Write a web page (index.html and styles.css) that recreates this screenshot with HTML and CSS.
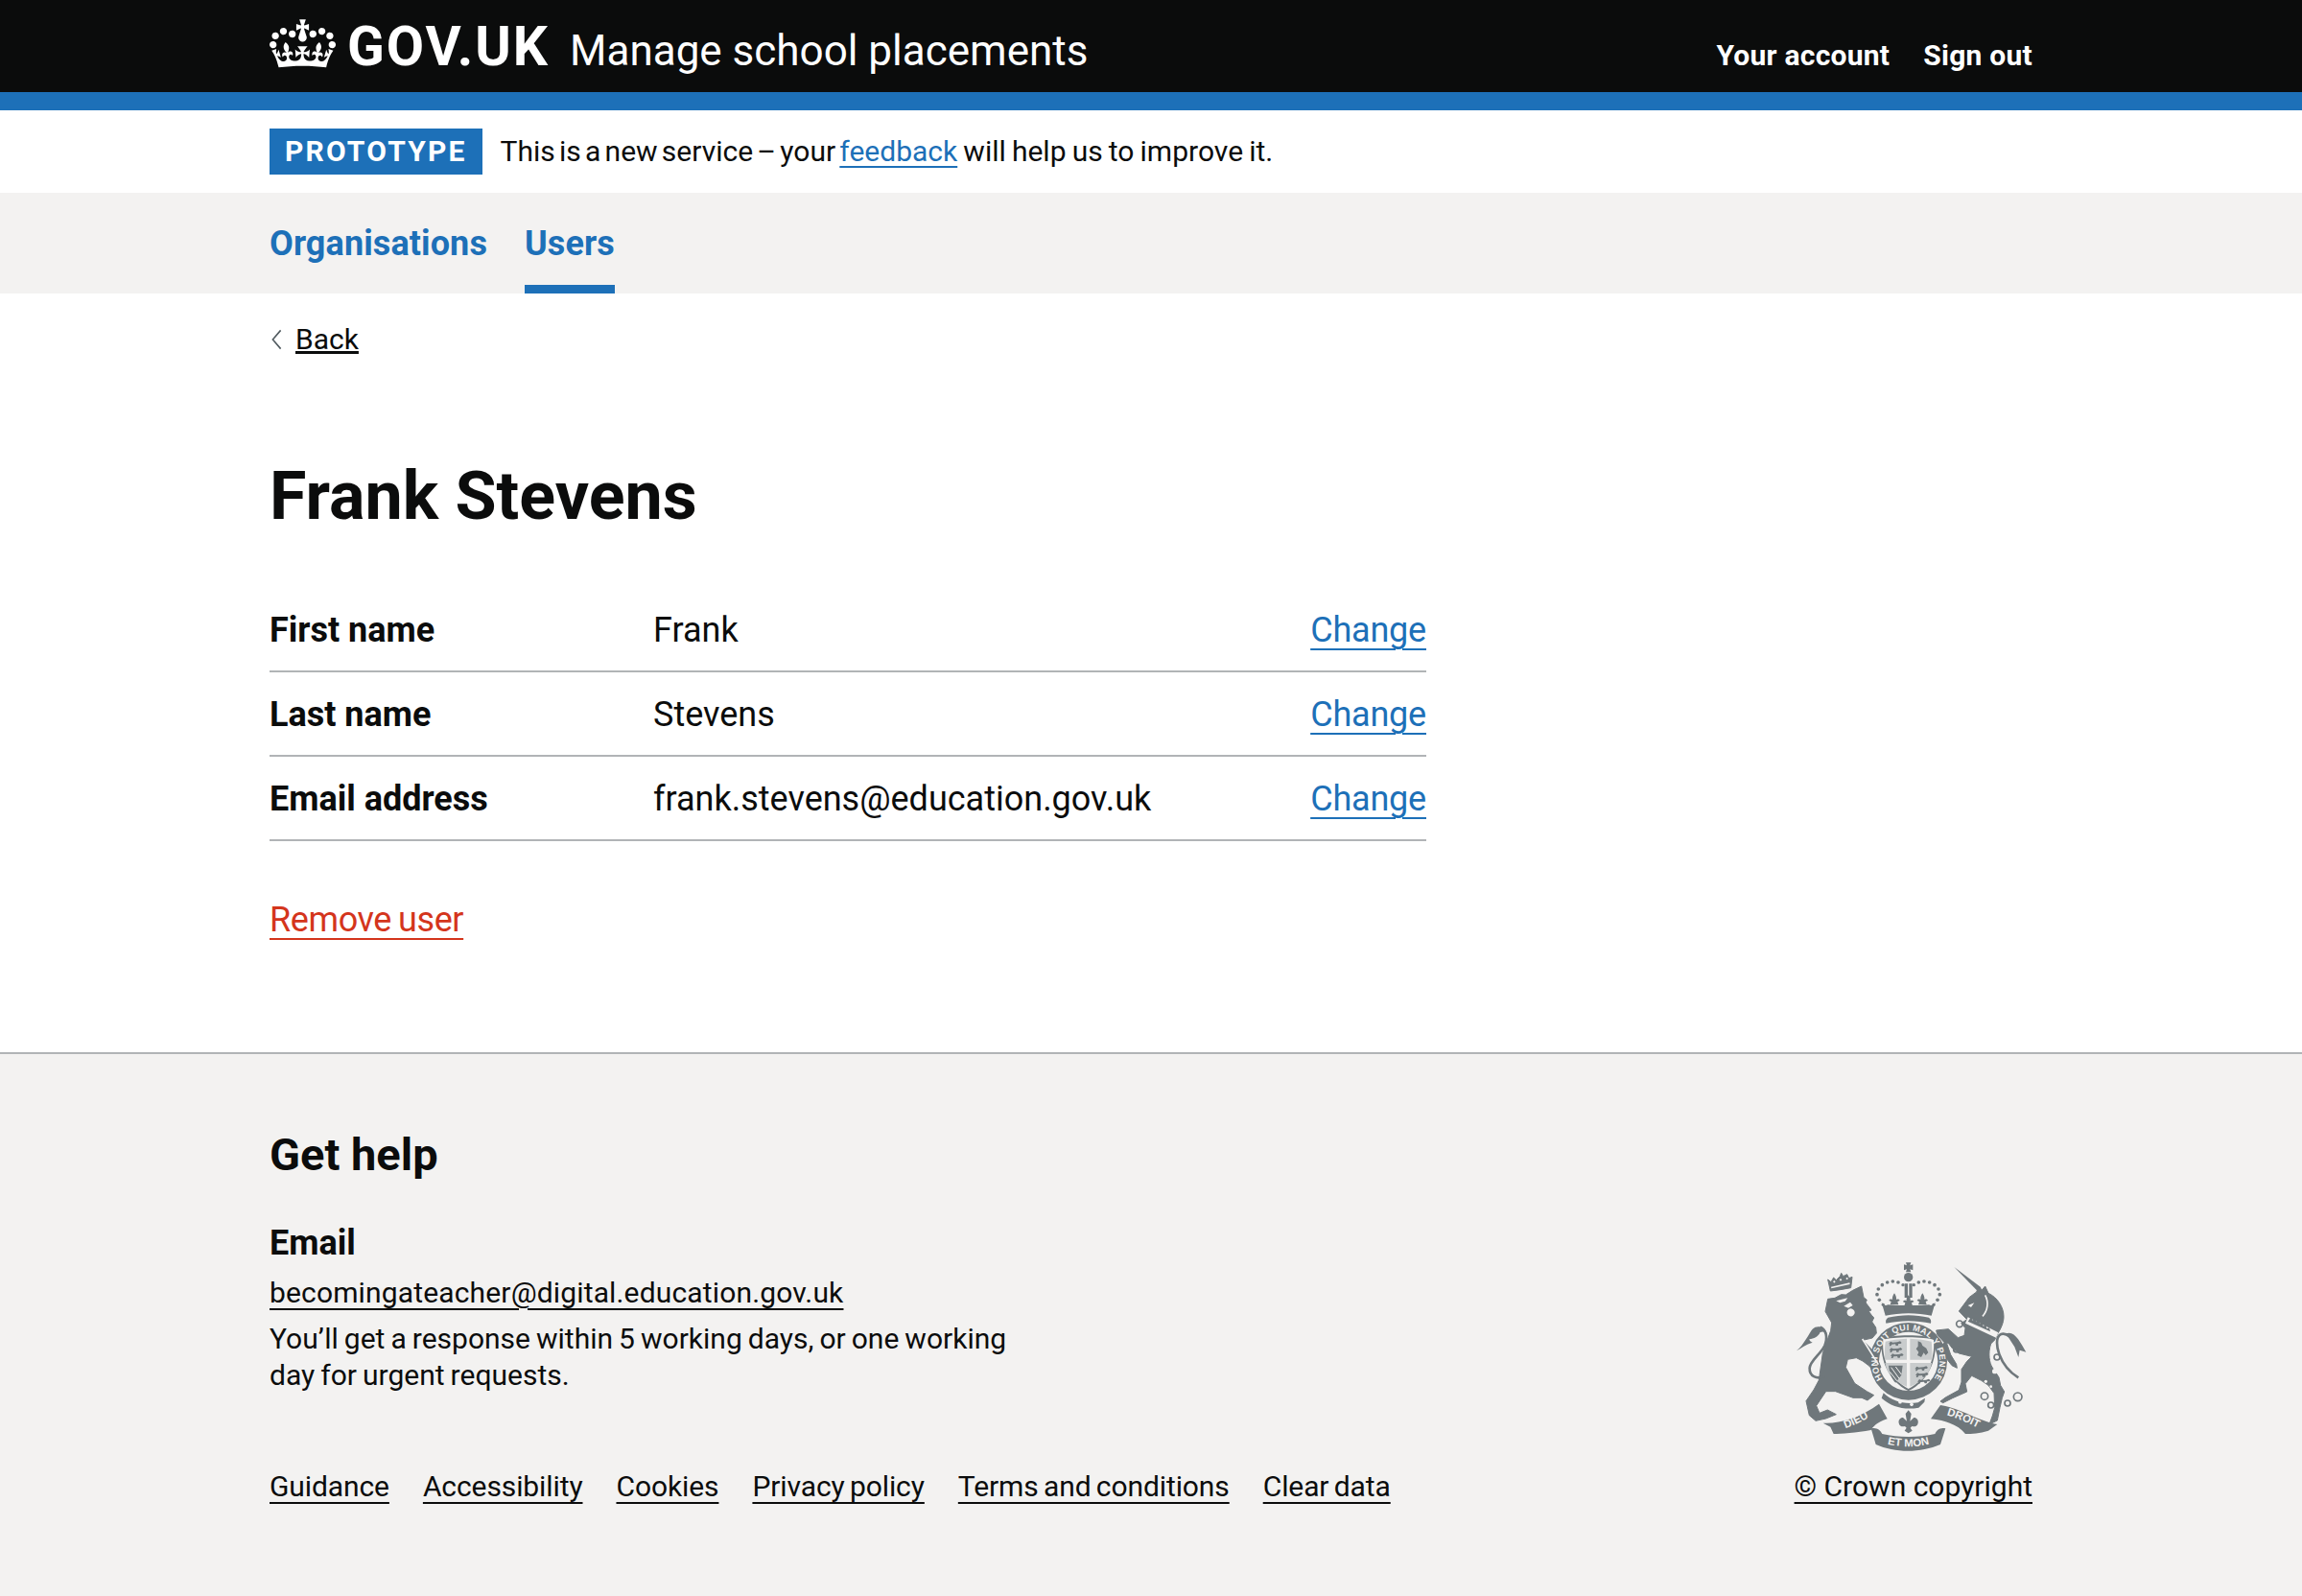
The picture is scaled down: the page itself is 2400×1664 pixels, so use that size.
FILE: index.html
```html
<!DOCTYPE html>
<html lang="en">
<head>
<meta charset="utf-8">
<title>Frank Stevens - Manage school placements</title>
<link rel="stylesheet" href="styles.css">
</head>
<body>
<header class="header">
  <div class="container header-row">
    <svg class="crown" viewBox="0 0 132 97" aria-hidden="true"><path fill="currentColor" fill-rule="evenodd" d="M25 30.2c3.5 1.5 7.7-.2 9.1-3.7 1.5-3.6-.2-7.8-3.9-9.2-3.6-1.4-7.6.3-9.1 3.9-1.4 3.5.3 7.5 3.9 9zM9 39.5c3.6 1.5 7.8-.2 9.2-3.7 1.5-3.6-.2-7.8-3.9-9.1-3.6-1.5-7.6.2-9.1 3.8-1.4 3.5.3 7.5 3.8 9zM4.4 57.2c3.5 1.5 7.7-.2 9.1-3.8 1.5-3.6-.2-7.7-3.9-9.1-3.5-1.5-7.6.3-9.1 3.8-1.4 3.5.3 7.6 3.9 9.1zm38.3-21.4c3.5 1.5 7.7-.2 9.1-3.8 1.5-3.6-.2-7.7-3.9-9.1-3.6-1.5-7.6.3-9.1 3.8-1.3 3.6.4 7.7 3.9 9.1zm64.4-5.6c-3.6 1.5-7.8-.2-9.1-3.7-1.5-3.6.2-7.8 3.8-9.2 3.6-1.4 7.7.3 9.2 3.9 1.3 3.5-.4 7.5-3.9 9zm15.9 9.3c-3.6 1.5-7.7-.2-9.1-3.7-1.5-3.6.2-7.8 3.7-9.1 3.6-1.5 7.7.2 9.2 3.8 1.5 3.5-.3 7.5-3.8 9zm4.7 17.7c-3.6 1.5-7.8-.2-9.2-3.8-1.5-3.6.2-7.7 3.9-9.1 3.6-1.5 7.7.3 9.2 3.8 1.3 3.5-.4 7.6-3.9 9.1zM89.3 35.8c-3.6 1.5-7.8-.2-9.2-3.8-1.4-3.6.2-7.7 3.9-9.1 3.6-1.5 7.7.3 9.2 3.8 1.4 3.6-.3 7.7-3.9 9.1zM69.7 17.7l8.9 4.7V9.3l-8.9 2.8c-.2-.3-.5-.6-.9-.9L72.4 0H59.6l3.5 11.2c-.3.3-.6.5-.9.9l-8.8-2.8v13.1l8.8-4.7c.3.3.6.7.9.9l-5 15.4v.1c-.2.8-.4 1.6-.4 2.4 0 4.1 3.1 7.5 7 8.1h.2c.3 0 .7.1 1 .1.4 0 .7 0 1-.1h.2c4-.6 7.1-4.1 7.1-8.1 0-.8-.1-1.7-.4-2.4V34l-5.1-15.4c.4-.2.7-.6 1-.9zM66 92.8c16.9 0 32.8 1.1 47.1 3.2 4-16.9 8.9-26.7 14-33.5l-9.6-3.4c1 4.9 1.1 7.2 0 10.2-1.5-1.4-3-4.3-4.2-8.7L108.6 76c2.8-2 5-3.2 7.5-3.3-4.4 9.4-10 11.9-13.6 11.2-4.3-.8-6.3-4.6-5.6-7.9 1-4.7 5.7-5.9 8-.5 4.3-8.7-3-11.4-7.6-8.8 7.1-7.2 7.9-13.5 2.1-21.1-8 6.1-8.1 12.3-4.5 20.8-4.7-5.4-12.1-2.5-9.5 6.2 3.4-5.2 7.9-2 7.2 3.1-.6 4.3-6.4 7.8-13.5 7.2-10.3-.9-10.9-8-11.2-13.8 2.5-.5 7.1 1.8 11 7.3L80.2 60c-4.1 4.4-8 5.3-12.3 5.4 1.4-4.4 8-11.6 8-11.6H55.5s6.4 7.2 7.9 11.6c-4.2-.1-8-1-12.3-5.4l1.4 16.4c3.9-5.5 8.5-7.7 10.9-7.3-.3 5.8-.9 12.8-11.1 13.8-7.2.6-12.9-2.9-13.5-7.2-.7-5 3.8-8.3 7.1-3.1 2.7-8.7-4.6-11.6-9.4-6.2 3.7-8.5 3.6-14.7-4.6-20.8-5.8 7.6-5 13.9 2.2 21.1-4.7-2.6-11.9.1-7.7 8.8 2.3-5.5 7.1-4.2 8.1.5.7 3.3-1.3 7.1-5.7 7.9-3.5.7-9-1.8-13.5-11.2 2.5.1 4.7 1.3 7.5 3.3l-4.7-15.4c-1.2 4.4-2.7 7.2-4.3 8.7-1.1-3-.9-5.3 0-10.2l-9.5 3.4c5 6.9 9.9 16.7 14 33.5 14.8-2.1 30.8-3.2 47.7-3.2z"/></svg>
    <a class="logo-text" href="#">GOV.UK</a>
    <a class="service-name" href="#">Manage school placements</a>
    <nav class="account-nav">
      <a href="#">Your account</a>
      <a href="#">Sign out</a>
    </nav>
  </div>
</header>

<div class="phase-banner">
  <div class="container phase-row">
    <strong class="tag">PROTOTYPE</strong>
    <span class="phase-text"><span class="phase-lead">This is a new service – your </span><a class="link" href="#">feedback</a><span class="phase-tail"> will help us to improve it.</span></span>
  </div>
</div>

<nav class="primary-nav">
  <div class="container primary-row">
    <a href="#">Organisations</a>
    <a class="current" href="#">Users</a>
  </div>
</nav>

<main class="container main">
  <a class="back" href="#"><svg class="chevron" viewBox="0 0 12 24" aria-hidden="true"><path d="M10.5 1.5 1.5 12l9 10.5" fill="none" stroke="#505a5f" stroke-width="1.7"/></svg><span>Back</span></a>
  <h1 class="title">Frank Stevens</h1>
  <dl class="summary">
    <div class="summary-row"><dt>First name</dt><dd>Frank</dd><dd class="action"><a class="link" href="#">Change</a></dd></div>
    <div class="summary-row"><dt>Last name</dt><dd>Stevens</dd><dd class="action"><a class="link" href="#">Change</a></dd></div>
    <div class="summary-row"><dt>Email address</dt><dd>frank.stevens@education.gov.uk</dd><dd class="action"><a class="link" href="#">Change</a></dd></div>
  </dl>
  <p class="remove"><a href="#">Remove user</a></p>
</main>

<footer class="footer">
  <div class="container footer-inner">
    <h2 class="help-title">Get help</h2>
    <h3 class="help-sub">Email</h3>
    <p class="help-link"><a href="#">becomingateacher@digital.education.gov.uk</a></p>
    <p class="help-text">You’ll get a response within 5 working days, or one working day for urgent requests.</p>
    <div class="footer-bottom">
      <ul class="footer-links">
        <li><a href="#">Guidance</a></li>
        <li><a href="#">Accessibility</a></li>
        <li><a href="#">Cookies</a></li>
        <li><a href="#">Privacy policy</a></li>
        <li><a href="#">Terms and conditions</a></li>
        <li><a href="#">Clear data</a></li>
      </ul>
      <div class="copyright">
        <svg class="crest" viewBox="0 0 750 630" role="img" aria-label="Royal coat of arms">
          <defs>
            <path id="garter" d="M306 404A97 97 0 1 1 418 404"/>
            <path id="scroll-l" d="M138 543C180 532 215 515 262 486"/>
            <path id="scroll-m" d="M276 578C330 596 395 596 448 578"/>
            <path id="scroll-r" d="M470 490C515 500 550 520 590 538"/>
            <path id="lion-mini" d="M0 9l6-8 7 3 14-1 9-3 5 5-4 3-6 0-2 6h-6l-2-5-11 1-3 5h-5l2-6z"/>
          </defs>
          <g class="crest-ink">
            <path d="M354 16h16l-3 9 9-3v18l-9-3 3 9h-16l3-9-9 3V22l9 3z"/>
            <circle cx="362" cy="62" r="14"/>
            <path d="M350 82h10v44h-10zM364 82h10v44h-10z"/>
            <g class="beads">
              <circle cx="283" cy="148" r="5"/><circle cx="271" cy="133" r="5.5"/><circle cx="264" cy="116" r="5.5"/><circle cx="268" cy="99" r="5.5"/><circle cx="280" cy="86" r="5.5"/><circle cx="296" cy="78" r="5.5"/><circle cx="313" cy="75" r="5.5"/><circle cx="330" cy="78" r="5.5"/><circle cx="345" cy="86" r="5"/>
              <circle cx="441" cy="148" r="5"/><circle cx="453" cy="133" r="5.5"/><circle cx="460" cy="116" r="5.5"/><circle cx="456" cy="99" r="5.5"/><circle cx="444" cy="86" r="5.5"/><circle cx="428" cy="78" r="5.5"/><circle cx="411" cy="75" r="5.5"/><circle cx="394" cy="78" r="5.5"/><circle cx="379" cy="86" r="5"/>
            </g>
            <path d="M318 112c5 7 7 14 6 20 5-3 10-1 11 3l-7 3 3 10h-26l3-10-7-3c1-4 6-6 11-3-1-6 1-13 6-20zM406 112c5 7 7 14 6 20 5-3 10-1 11 3l-7 3 3 10h-26l3-10-7-3c1-4 6-6 11-3-1-6 1-13 6-20zM362 118c5 6 7 12 6 18 5-3 10-1 11 3l-7 3 3 10h-26l3-10-7-3c1-4 6-6 11-3-1-6 1-12 6-18z"/>
            <path d="M278 140c4 6 8 10 14 10l6-2 24 2h80l24-2 6 2c6 0 10-4 14-10l-12 42c-44-10-100-10-144 0z"/>
            <path d="M292 206c-2-8 0-14 6-18 42-10 86-10 128 0 6 4 8 10 6 18-44-10-96-10-140 0z"/>
            <circle cx="362" cy="325" r="121"/>
            <circle class="paper" cx="362" cy="325" r="92"/>
            <path d="M278 254c30-14 138-14 168 0 6 68-22 132-84 164-62-32-90-96-84-164z"/>
            <path class="paper" d="M283 258c28-11 130-11 158 0 5 62-21 122-79 153-58-31-84-91-79-153z"/>
            <path class="tint" d="M290 263c18-5 40-8 67-9v66h-69c-1-20 0-39 2-57zM367 254c27 1 49 4 67 9 2 18 3 37 2 57h-69zM367 330h68c-4 28-26 58-68 74zM289 330h68v74c-42-16-64-46-68-74z"/>
            <use href="#lion-mini" x="300" y="262"/><use href="#lion-mini" x="302" y="282"/><use href="#lion-mini" x="306" y="300"/>
            <use href="#lion-mini" x="382" y="340"/><use href="#lion-mini" x="384" y="360"/><use href="#lion-mini" x="390" y="380"/>
            <path d="M392 262l10 4 4 10 12 8 6 14-8 8-6-8-8 14-12-6 4-10-8-10 6-8zM300 338l44 0-4 30-18 24c-12-12-20-32-22-54z"/>
            <path class="line-thin" d="M308 344l26 36M322 342l18 24M304 358l22 28"/>
            <path d="M284 424c28 28 66 36 108 30l22-14-2 12-18 18c-44 8-84-2-116-30z"/>
            <circle class="paper" cx="336" cy="452" r="5.5"/><circle class="paper" cx="372" cy="460" r="5.5"/>
            <path class="soft" d="M118 105l-8-36 10 8 8-14 8 8 12-12 4-10 6 10 12-6 6 12 10-4-4 34c-20 4-44 8-64 10z"/>
            <path class="paper" d="M120 92l58-13 1 5-58 13zM130 72l4 4-4 4-4-4zM150 66l4 4-4 4-4-4zM170 62l4 4-4 4-4-4z"/>
            <path class="soft" d="M110 130l22-3 20-11 14 1 22-14 27-13 7 35 10 8-4 8 18 24-8 4 9 12 7 8-6 12 12 18 2 18-13 15-30 7 37 38 20 47-20 13-17-18-20-15-20-10-27 5-6 25 28 50 38 25 22 12-20 16-18-8-27 0-55-20-30 0-30 45 10 23 25-10 27 14-32 13-32 7-20-17-10-45 24-35 16-30 12-85 25-70 3-25-20-35z"/>
            <path class="paper" d="M136 136l26-7 10-2-8 10-16 5zM160 152l20-12 8 10-14 8zM175 162a12 12 0 1 1 0 20 12 12 0 0 1 0-20z"/>
            <path class="line-paper" d="M218 255l50 80"/>
            <path class="line-ink" d="M100 372c-26 10-48 0-47-26 1-22 35-44 47-70 10-24 6-50-14-58"/>
            <path d="M108 240c-6-24-32-30-46-16-10 12-26 48-50 68 14-8 30-20 50-26-6-2-10-6-10-10 14-2 28-8 34-22 10-4 18 0 22 6z"/>
            <path d="M505 30l84 64-11 11z"/>
            <path class="soft" d="M520 168l15-20 17-23 23-17 7-18 10 12 10-12 10 22c28 13 48 43 48 73 0 20-10 40-20 55l-8 18-12 12c-10 30-5 60 5 75l20 30 5 25 12 20-7 20-7 30-8 40-25 12 10-27 7-25-2-45-18-25-22-15-30-15-20 25 5 25-45 20-30 15-8-5 16-12 42-23 8-25 0-40 17-25 15-15-40-10-20-15-14-18-4 2 12 35 18 30 2 12-16-8-22-28-12-32 10-12-22-25-3-13 38-4 30 27 20-7 3-23-13-15 18-12z"/>
            <path class="paper" d="M548 150l20-8-10 14zM548 187l95 48-7 16-96-45z"/>
            <path class="line-paper" d="M602 118c12 22 8 48-8 66"/>
            <path d="M552 196l5-10 6 11 7-7 4 12 8-6 3 12 8-5 3 12 8-4 3 12 8-3 3 12-70-32z"/>
            <path class="line-ink" d="M706 286c-10-30-42-58-60-42-18 18-2 94 60 132"/>
            <path d="M668 238c26-10 44 28 62 58l-20-6-4 22-12-32-18-28z"/>
            <g class="rings">
              <circle cx="522" cy="208" r="10"/><circle cx="512" cy="288" r="9"/><circle cx="639" cy="312" r="9"/><circle cx="600" cy="434" r="11"/><circle cx="620" cy="462" r="9"/><circle cx="672" cy="456" r="9"/><circle cx="704" cy="436" r="13"/>
            </g>
            <circle class="paper" cx="632" cy="356" r="8"/><circle class="paper" cx="604" cy="388" r="5"/><circle class="paper" cx="620" cy="404" r="4"/>
            <path d="M95 518c45 4 120-18 175-60l26 47c-31 10-46 25-51 35-45 8-95 12-117 12l-10-22z"/>
            <path d="M245 535c17-5 30 5 35 17 50 12 115 12 165 0 5-12 17-22 33-17l-16 50c-62 27-142 27-202 0z"/>
            <path d="M432 505l30-43c58 8 128 53 178 60l-28 20c-27 8-52 10-72 10-20-27-60-42-108-47z"/>
            <path d="M362 478l9 11-4 23 12-11c9 0 15 8 13 17-2 10-11 13-19 10l-5 5 6 9-12 8-12-8 6-9-5-5c-8 3-17 0-19-10-2-9 4-17 13-17l12 11-4-23z"/>
          </g>
          <g class="crest-text">
            <text class="motto-small"><textPath href="#garter" startOffset="50%" text-anchor="middle">HONI SOIT QUI MAL Y PENSE</textPath></text>
            <text class="motto"><textPath href="#scroll-l" startOffset="50%" text-anchor="middle">DIEU</textPath></text>
            <text class="motto"><textPath href="#scroll-m" startOffset="50%" text-anchor="middle">ET MON</textPath></text>
            <text class="motto"><textPath href="#scroll-r" startOffset="50%" text-anchor="middle">DROIT</textPath></text>
          </g>
        </svg>
        <a href="#">© Crown copyright</a>
      </div>
    </div>
  </div>
</footer>
</body>
</html>
```
FILE: styles.css
```css
* { box-sizing: border-box; }
html, body { margin: 0; padding: 0; }
body {
  font-family: Roboto, "Noto Sans", "Liberation Sans", Arial, sans-serif;
  font-size: 30px;
  line-height: 38px;
  color: #0b0c0c;
  background: #fff;
}
a { color: inherit; }
.container { width: 1838px; margin: 0 auto; }

.header { background: #0b0c0c; color: #fff; height: 115px; border-bottom: 19px solid #1d70b8; }
.header-row { display: flex; align-items: baseline; height: 96px; padding-top: 19px; }
.header a { color: #fff; text-decoration: none; }
.crown { width: 69px; height: 51px; align-self: flex-start; margin: 1px 12px 0 0; flex: none; }
.logo-text { font-size: 57px; line-height: 60px; font-weight: 700; margin-right: 21px; letter-spacing: 2px; }
.service-name { font-size: 44px; line-height: 60px; }
.account-nav { margin-left: auto; display: flex; gap: 35px; font-size: 30px; font-weight: 700; letter-spacing: 0.25px; }

.phase-banner { height: 86px; background: #fff; }
.phase-row { display: flex; align-items: center; gap: 19px; height: 86px; padding-bottom: 1px; }
.tag { background: #1d70b8; color: #fff; font-size: 30px; line-height: 48px; height: 48px; padding: 0 16px; letter-spacing: 2.2px; font-weight: 700; }
.phase-text { font-size: 30px; }
.phase-lead { word-spacing: -3.2px; }
.phase-tail { word-spacing: -1.3px; }
.link { color: #1d70b8; }
.link, .back span, .remove a, .footer a { text-decoration-thickness: 2px; text-underline-offset: 5px; }
.summary .link, .remove a { text-underline-offset: 7px; }
.footer a { text-underline-offset: 6px; }

.primary-nav { background: #f3f2f1; height: 105px; }
.primary-row { display: flex; gap: 39px; height: 105px; }
.primary-row a { color: #1d70b8; font-size: 36px; font-weight: 700; line-height: 46px; padding-top: 30px; text-decoration: none; letter-spacing: 0.1px; }
.primary-row a.current { border-bottom: 9px solid #1d70b8; }

.main { padding-top: 29px; height: 791px; }
.back { display: inline-flex; align-items: center; gap: 14px; padding-left: 2px; font-size: 30px; line-height: 38px; }
.chevron { width: 11px; height: 24px; }
.title { font-size: 70px; line-height: 80px; font-weight: 700; margin: 102px 0 0; }
.summary { width: 1206px; margin: 56px 0 0; }
.summary-row { display: flex; align-items: baseline; height: 88px; padding-top: 21px; border-bottom: 2px solid #b1b4b6; font-size: 36px; line-height: 46px; }
.summary dt { width: 400px; font-weight: 700; }
.summary dd { margin: 0; }
.summary .action { margin-left: auto; letter-spacing: -0.2px; }
.remove { margin: 59px 0 0; font-size: 36px; line-height: 46px; letter-spacing: -0.4px; word-spacing: -1.5px; }
.remove a { color: #d4351c; }

.footer { background: #f3f2f1; border-top: 2px solid #b1b4b6; height: 567px; padding-top: 77px; }
.help-title { font-size: 47px; line-height: 56px; margin: 0; font-weight: 700; }
.help-sub { font-size: 36px; line-height: 46px; margin: 41px 0 0; font-weight: 700; }
.help-link { margin: 10px 0 0; letter-spacing: 0.15px; }
.help-text { margin: 10px 0 0; width: 790px; word-spacing: -1.4px; }
.footer-bottom { display: flex; justify-content: space-between; align-items: flex-end; margin-top: -142px; }
.footer-links { display: flex; gap: 35px; list-style: none; margin: 0; padding: 0; letter-spacing: -0.1px; word-spacing: -2px; }
.copyright { display: flex; flex-direction: column; align-items: flex-end; gap: 10px; }
.crest { width: 250px; height: 210px; }
.crest-ink > *, .crest-ink > g > * { fill: #6f777b; }
.crest-ink > .soft { stroke: #6f777b; stroke-width: 3px; stroke-linejoin: round; }
.crest-ink > .paper { fill: #f3f2f1; }
.crest-ink > .tint { fill: #c9cccd; }
.crest-ink > .line-paper { fill: none; stroke: #f3f2f1; stroke-width: 5px; }
.crest-ink > .line-thin { fill: none; stroke: #f3f2f1; stroke-width: 3px; }
.crest-ink > .line-ink { fill: none; stroke: #6f777b; stroke-width: 8px; }
.crest-ink > .rings > * { fill: none; stroke: #6f777b; stroke-width: 5px; }
.crest-text { fill: #f3f2f1; font-family: "Liberation Sans", Arial, sans-serif; font-weight: 700; }
.motto { font-size: 34px; }
.motto-small { font-size: 27px; letter-spacing: 1.5px; }
```
